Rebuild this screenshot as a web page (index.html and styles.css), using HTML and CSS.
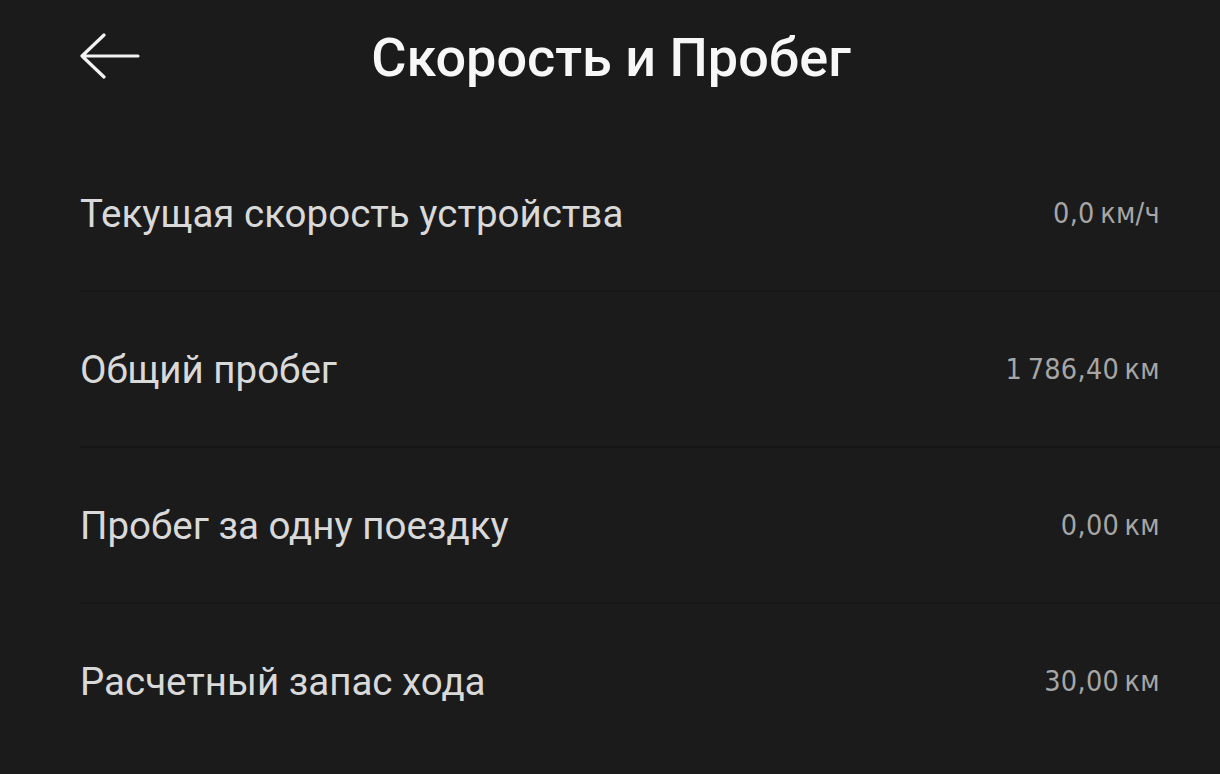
FILE: index.html
```html
<!DOCTYPE html>
<html lang="ru">
<head>
  <meta charset="UTF-8" />
  <meta name="viewport" content="width=device-width, initial-scale=1.0"/>
  <title>Скорость и Пробег</title>
  <link rel="stylesheet" href="styles.css">
</head>
<body>

<header>
  <button class="back-btn" aria-label="Назад">
    <svg width="60" height="48" viewBox="0 0 60 48">
      <path d="M24 3 L2 24 L24 45 M2 24 H58" fill="none" stroke="#f2f2f2" stroke-width="3.2" stroke-linecap="round" stroke-linejoin="round"/>
    </svg>
  </button>
  <h1>Скорость и Пробег</h1>
</header>

<main>
  <div class="row">
    <span class="label">Текущая скорость устройства</span>
    <span class="value">0,0 км/ч</span>
  </div>
  <div class="row">
    <span class="label">Общий пробег</span>
    <span class="value">1 786,40 км</span>
  </div>
  <div class="row">
    <span class="label">Пробег за одну поездку</span>
    <span class="value">0,00 км</span>
  </div>
  <div class="row last">
    <span class="label">Расчетный запас хода</span>
    <span class="value">30,00 км</span>
  </div>
</main>

</body>
</html>
```

FILE: styles.css
```css
body {
  margin: 0; font-family: Roboto, 'Noto Sans', sans-serif; background: #1b1b1b;
  color: #d8d8d8; height: 774px; overflow: hidden;
}
header {
  position: relative; height: 136px;
  display: flex; justify-content: center;
}
header h1 {
  margin: 0; padding-top: 28px; font-size: 54px; font-weight: 500; color: #f7f7f7;
  line-height: 60px; padding-left: 2px;
}
.back-btn {
  position: absolute; left: 80px; top: 32px;
  background: none; border: none; padding: 0; cursor: pointer;
}
.back-btn svg { display: block; }
main { padding-left: 80px; }
.row {
  height: 154px; border-bottom: 2px solid #161616;
  display: flex; justify-content: space-between; align-items: center;
  padding-right: 60px;
}
.row.last { border-bottom: none; }
.label { font-size: 38.5px; color: #d9d9d9; }
.value {
  font-family: 'DejaVu Sans Condensed', 'DejaVu Sans', sans-serif;
  font-size: 28.5px; color: #a6a6a6; word-spacing: -3px; letter-spacing: 0.3px;
}
```
